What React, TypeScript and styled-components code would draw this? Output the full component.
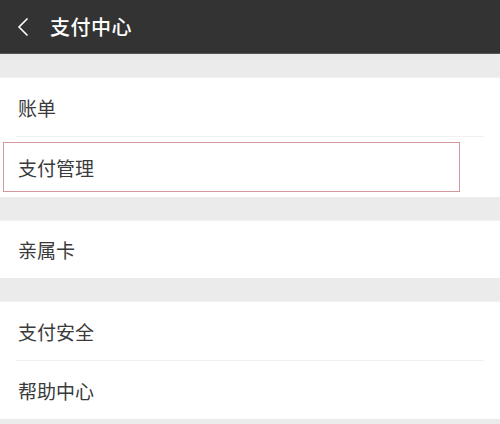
import React, { ReactElement } from 'react'
import styled, { createGlobalStyle } from 'styled-components'

const GlobalStyle = createGlobalStyle`
  html, body {
    margin: 0;
    padding: 0;
    background: #ebebeb;
    font-family: "Noto Sans CJK SC", "Noto Sans", sans-serif;
  }
`

const Page = styled.div`
  width: 500px;
  height: 424px;
  overflow: hidden;
  background: #ebebeb;
`

const Header = styled.div`
  height: 54px;
  background: #333333;
  display: flex;
  align-items: center;
  padding-left: 17px;
  gap: 21px;
  border-bottom: 1px solid #555;
  box-sizing: border-box;
`

const Title = styled.div`
  color: #ffffff;
  font-size: 20px;
  font-weight: 500;
  letter-spacing: 0.5px;
`

const Group = styled.div<{ $gap: number }>`
  margin-top: ${p => p.$gap}px;
  background: #ffffff;
  border-top: 1px solid #f2f2f2;
`

const Row = styled.div<{ $h: number; $divider?: boolean }>`
  position: relative;
  height: ${p => p.$h}px;
  display: flex;
  align-items: center;
  padding-left: 18px;
  box-sizing: border-box;

  &::after {
    content: '';
    display: ${p => (p.$divider ? 'block' : 'none')};
    position: absolute;
    left: 16px;
    right: 16px;
    bottom: 0;
    height: 1px;
    background: #f0f0f0;
  }
`

const Label = styled.span`
  font-size: 19px;
  color: #3a3a3a;
`

const Highlight = styled.div`
  position: absolute;
  left: 3px;
  top: 5px;
  width: 457px;
  height: 50px;
  border: 1.5px solid #d6989c;
  box-sizing: border-box;
`

function BackIcon(): ReactElement {
  return (
    <svg width="12" height="20" viewBox="0 0 12 20">
      <path d="M10.5 1.5 L2 10 L10.5 18.5" fill="none" stroke="#ffffff" strokeWidth="1.6" />
    </svg>
  )
}

export default function App(): ReactElement {
  return (
    <Page>
      <GlobalStyle />
      <Header>
        <BackIcon />
        <Title>支付中心</Title>
      </Header>
      <Group $gap={23}>
        <Row $h={59} $divider>
          <Label>账单</Label>
        </Row>
        <Row $h={60}>
          <Label>支付管理</Label>
          <Highlight />
        </Row>
      </Group>
      <Group $gap={23}>
        <Row $h={57}>
          <Label>亲属卡</Label>
        </Row>
      </Group>
      <Group $gap={23}>
        <Row $h={59} $divider>
          <Label>支付安全</Label>
        </Row>
        <Row $h={58}>
          <Label>帮助中心</Label>
        </Row>
      </Group>
    </Page>
  )
}
